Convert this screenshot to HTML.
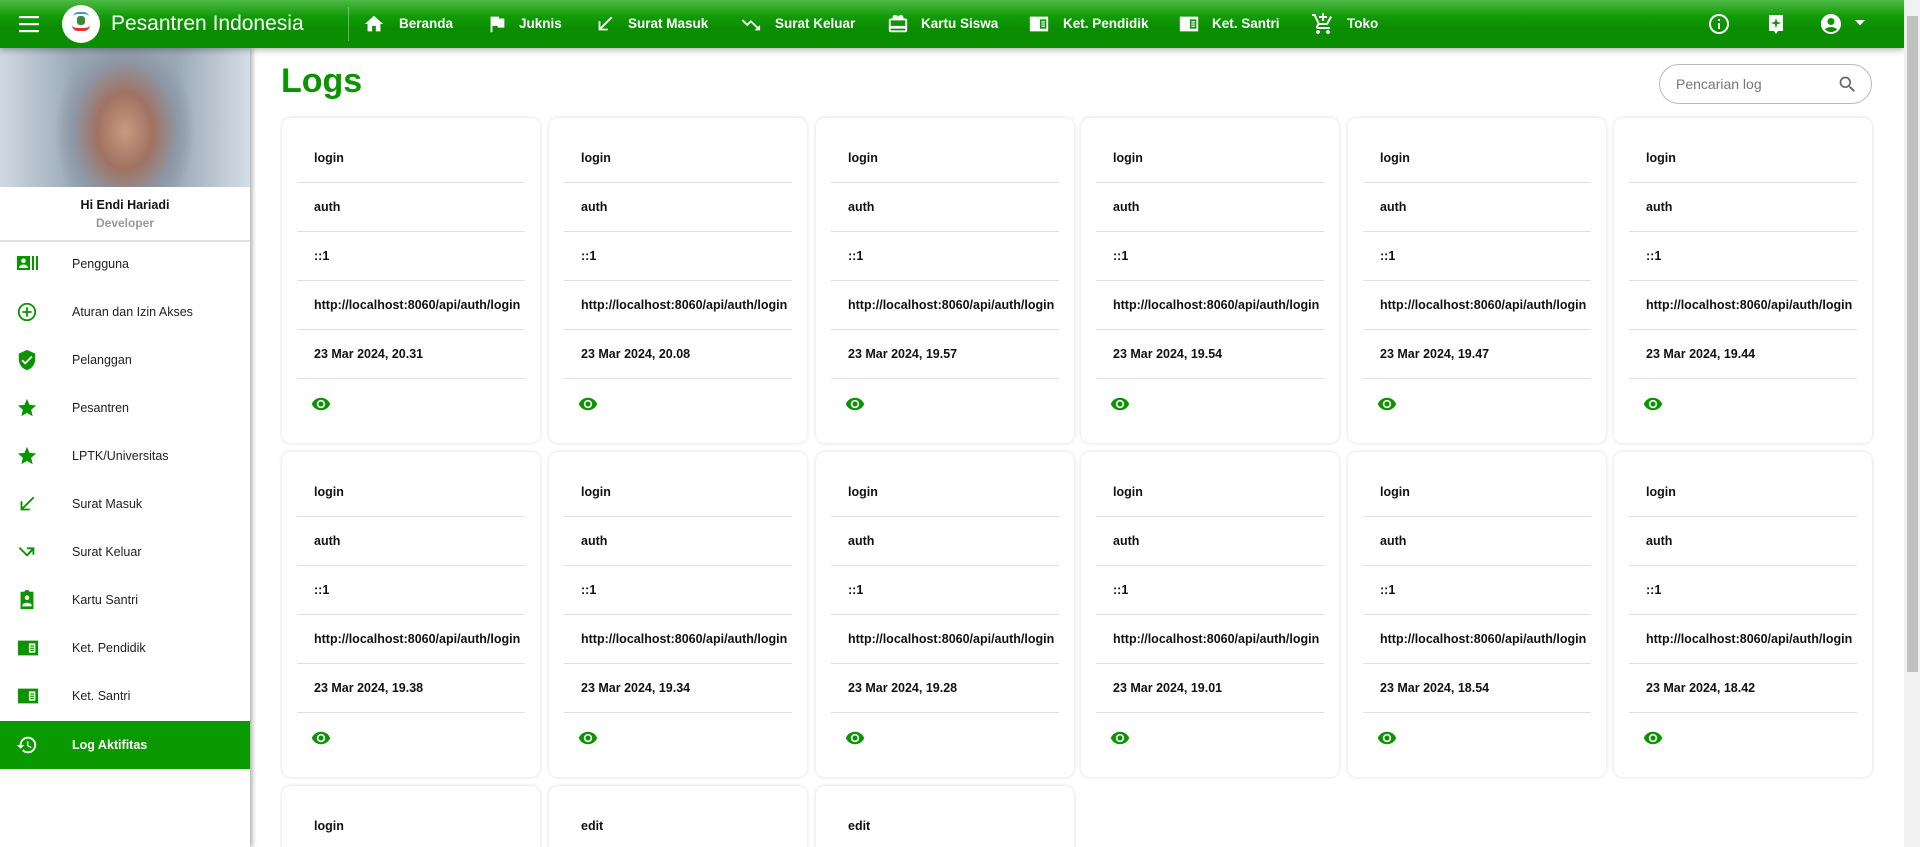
<!DOCTYPE html>
<html style="overflow:hidden;height:847px"><head><meta charset="utf-8"><style>
*{box-sizing:border-box;margin:0;padding:0}
body{width:1920px;height:847px;overflow:hidden;background:#fff;font-family:"Liberation Sans",sans-serif;position:relative}
.nav{position:absolute;left:0;top:0;width:1904px;height:48px;background:linear-gradient(#4cb944 0%,#129a08 35%,#0a8e00 60%,#0a8e00 100%);box-shadow:0 2px 6px rgba(0,0,0,.3);z-index:5;color:#fff}
.nav .t{position:absolute;top:0;line-height:48px;font-size:13.5px;font-weight:bold}
.nav svg{position:absolute;fill:#fff}
.scroll{position:absolute;right:0;top:0;width:16px;height:847px;background:#f1f1f1;z-index:6}
.scroll div{position:absolute;left:3px;top:16px;width:11px;height:656px;background:#c1c1c1}
.side{position:absolute;left:0;top:48px;width:250px;height:799px;background:#fff;box-shadow:2px 0 5px rgba(0,0,0,.35);z-index:3}
.mi{position:absolute;left:0;width:250px;height:48px;font-size:12.5px;color:#222;line-height:48px}
.mi span{position:absolute;left:72px}
.mi svg{position:absolute;left:16px;top:13px;fill:#0a9400}
.mi.act{background:#0a9a00;color:#fff;font-weight:bold}
.mi.act svg{fill:#fff}
.card{position:absolute;width:258px;height:325px;background:#fff;border-radius:9px;box-shadow:0 0 4px rgba(0,0,0,.14)}
.row{position:absolute;left:15px;right:15px;height:49px;border-bottom:1.5px solid #e0e0e0;font-size:12.5px;font-weight:bold;color:#111;line-height:48px;padding-left:17px}
.card svg{position:absolute;left:28px;top:276px;fill:#0a9400}
</style></head><body>
<div class="nav">
<svg style="left:19px;top:15px" width="20" height="18" viewBox="0 0 20 18"><rect y="1" width="20" height="2.2"/><rect y="8" width="20" height="2.2"/><rect y="15" width="20" height="2.2"/></svg>
<div style="position:absolute;left:62px;top:5px;width:38px;height:38px;border-radius:50%;background:#fff"><div style="position:absolute;left:10px;top:20px;width:18px;height:6px;border-bottom:3px solid #d33;border-radius:0 0 8px 8px"></div><div style="position:absolute;left:15px;top:11px;width:8px;height:9px;background:#3a8a3a;border-radius:3px"></div><div style="position:absolute;left:11px;top:7px;width:16px;height:5px;border-top:2px solid #3aa0c0;border-radius:8px 8px 0 0"></div></div>
<div class="t" style="left:111px;font-size:21px;font-weight:normal">Pesantren Indonesia</div>
<div style="position:absolute;left:348px;top:7px;width:1px;height:34px;background:rgba(255,255,255,.35)"></div>
<svg style="left:363px;top:13px" width="22" height="22" viewBox="0 0 24 24"><path d="M10 20v-6h4v6h5v-8h3L12 3 2 12h3v8z"/></svg><div class="t" style="left:399px">Beranda</div>
<svg style="left:486px;top:13px" width="22" height="22" viewBox="0 0 24 24"><path d="M14.4 6 14 4H5v17h2v-7h5.6l.4 2h7V6z"/></svg><div class="t" style="left:519px">Juknis</div>
<svg style="left:594px;top:13px" width="22" height="22" viewBox="0 0 24 24"><path d="M20 5.41 18.59 4 7 15.59V9H5v10h10v-2H8.41z"/></svg><div class="t" style="left:628px">Surat Masuk</div>
<svg style="left:739px;top:13px" width="22" height="22" viewBox="0 0 24 24"><path d="M3 8.41 9 14.41l4-4 6.3 6.29L17 19h6v-6l-2.29 2.29L13 7.59l-4 4-4.59-4.59z"/></svg><div class="t" style="left:775px">Surat Keluar</div>
<svg style="left:887px;top:13px" width="22" height="22" viewBox="0 0 24 24"><path d="M20 6h-2.18c.11-.31.18-.65.18-1 0-1.66-1.34-3-3-3-1.05 0-1.960.54-2.5 1.35l-.5.67-.5-.68C10.96 2.54 10.05 2 9 2 7.34 2 6 3.34 6 5c0 .35.07.69.18 1H4c-1.11 0-2 .89-2 2v11c0 1.11.89 2 2 2h16c1.11 0 2-.89 2-2V8c0-1.110-.89-2-2-2zm0 13H4v-2h16v2zm0-5H4V8h16v6z"/></svg><div class="t" style="left:921px">Kartu Siswa</div>
<svg style="left:1028px;top:13px" width="22" height="22" viewBox="0 0 24 24"><path d="M2 4h20v16H2zM13 7v10h7V7zm1.5 2h4v1.3h-4zm0 2.4h4v1.3h-4zm0 2.4h4v1.3h-4z" fill-rule="evenodd"/></svg><div class="t" style="left:1063px">Ket. Pendidik</div>
<svg style="left:1178px;top:13px" width="22" height="22" viewBox="0 0 24 24"><path d="M2 4h20v16H2zM13 7v10h7V7zm1.5 2h4v1.3h-4zm0 2.4h4v1.3h-4zm0 2.4h4v1.3h-4z" fill-rule="evenodd"/></svg><div class="t" style="left:1212px">Ket. Santri</div>
<svg style="left:1311px;top:12px" width="24" height="24" viewBox="0 0 24 24"><path d="M11 9h2V6h3V4h-3V1h-2v3H8v2h3v3zm-4 9c-1.1 0-2 .9-2 2s.9 2 2 2 2-.9 2-2-.9-2-2-2zm10 0c-1.1 0-2 .9-2 2s.9 2 2 2 2-.9 2-2-.9-2-2-2zm-8.9-5h7.45c.75 0 1.41-.41 1.75-1.03L21 4.96 19.25 4l-3.7 7H8.53L4.27 2H1v2h2l3.6 7.59-1.35 2.44C4.52 15.37 5.48 17 7 17h12v-2H7l1.1-2z"/></svg><div class="t" style="left:1347px">Toko</div>
<svg style="left:1707px;top:12px" width="24" height="24" viewBox="0 0 24 24"><path d="M12 2a10 10 0 1 0 0 20 10 10 0 0 0 0-20zm0 18a8 8 0 1 1 0-16 8 8 0 0 1 0 16zm-1-3h2v-6h-2zm0-8h2V7h-2z"/></svg>
<svg style="left:1764px;top:12px" width="24" height="24" viewBox="0 0 24 24"><path d="M5 3h14v16h-5l-2 3-2-3H5zm7 3-1.2 3.8L7 11l3.8 1.2L12 16l1.2-3.8L17 11l-3.8-1.2z" fill-rule="evenodd"/></svg>
<svg style="left:1819px;top:12px" width="24" height="24" viewBox="0 0 24 24"><path d="M12 2C6.48 2 2 6.48 2 12s4.48 10 10 10 10-4.48 10-10S17.52 2 12 2zm0 4c1.93 0 3.5 1.57 3.5 3.5S13.93 13 12 13s-3.5-1.57-3.5-3.5S10.07 6 12 6zm0 14c-2.03 0-4.430-.82-6.14-2.88C7.55 15.8 9.68 15 12 15s4.45.8 6.14 2.12C16.43 19.18 14.03 20 12 20z"/></svg>
<svg style="left:1854px;top:19px" width="12" height="8" viewBox="0 0 12 8"><path d="M1 1h10L6 6.5z"/></svg>
</div>
<div class="scroll"><div></div></div>
<div class="side">
<div style="position:absolute;left:0;top:0;width:250px;height:139px;background:radial-gradient(ellipse 70px 95px at 50% 60%,#c79a80 0%,#a07262 40%,rgba(140,150,165,.9) 75%,transparent 100%),linear-gradient(90deg,#cfd9e2,#9aa8b6 30%,#9aa8b6 70%,#d5dee6)"></div>
<div style="position:absolute;top:150px;width:250px;text-align:center;font-size:12.5px;font-weight:bold;color:#111">Hi Endi Hariadi</div>
<div style="position:absolute;top:168px;width:250px;text-align:center;font-size:12px;font-weight:bold;color:#999">Developer</div>
<div style="position:absolute;left:0;top:192px;width:250px;height:1.5px;background:#e0e0e0"></div>
</div>
<div style="position:absolute;left:0;top:240px;z-index:4">
<div class="mi" style="top:0"><svg width="24" height="22" viewBox="0 0 24 22"><path d="M1 3h13v14H1zm6.5 2.5a2.3 2.3 0 1 0 0 4.6 2.3 2.3 0 0 0 0-4.6zM3 15h9c0-2-2-3.5-4.5-3.5S3 13 3 15zM16 3h2v14h-2zm4 0h2v14h-2z" fill-rule="evenodd"/></svg><span>Pengguna</span></div>
<div class="mi" style="top:48px"><svg width="22" height="22" viewBox="0 0 24 24"><path d="M13 7h-2v4H7v2h4v4h2v-4h4v-2h-4zm-1-5C6.49 2 2 6.49 2 12s4.49 10 10 10 10-4.49 10-10S17.51 2 12 2zm0 18c-4.41 0-8-3.59-8-8s3.59-8 8-8 8 3.59 8 8-3.59 8-8 8z"/></svg><span>Aturan dan Izin Akses</span></div>
<div class="mi" style="top:96px"><svg width="22" height="22" viewBox="0 0 24 24"><path d="M12 1 3 5v6c0 5.55 3.84 10.74 9 12 5.16-1.26 9-6.45 9-12V5zm-2 16-4-4 1.41-1.41L10 14.17l6.59-6.59L18 9z"/></svg><span>Pelanggan</span></div>
<div class="mi" style="top:144px"><svg width="22" height="22" viewBox="0 0 24 24"><path d="M12 17.27 18.18 21l-1.64-7.03L22 9.24l-7.19-.61L12 2 9.19 8.63 2 9.24l5.46 4.73L5.82 21z"/></svg><span>Pesantren</span></div>
<div class="mi" style="top:192px"><svg width="22" height="22" viewBox="0 0 24 24"><path d="M12 17.27 18.18 21l-1.64-7.03L22 9.24l-7.19-.61L12 2 9.19 8.63 2 9.24l5.46 4.73L5.82 21z"/></svg><span>LPTK/Universitas</span></div>
<div class="mi" style="top:240px"><svg width="22" height="22" viewBox="0 0 24 24"><path d="M20 5.41 18.59 4 7 15.59V9H5v10h10v-2H8.41z"/></svg><span>Surat Masuk</span></div>
<div class="mi" style="top:288px"><svg width="22" height="22" viewBox="0 0 24 24"><path d="M3 8l9 9 6-6v4h2V7h-8v2h4.6L12 14.2 4.4 6.6z"/></svg><span>Surat Keluar</span></div>
<div class="mi" style="top:336px"><svg width="22" height="22" viewBox="0 0 24 24"><path d="M19 3h-4.18C14.4 1.84 13.3 1 12 1s-2.4.84-2.82 2H5v19h14zm-7 4a2.5 2.5 0 1 1 0 5 2.5 2.5 0 0 1 0-5zm5 12H7v-1.5c0-1.67 3.33-2.5 5-2.5s5 .83 5 2.5z"/></svg><span>Kartu Santri</span></div>
<div class="mi" style="top:384px"><svg width="24" height="22" viewBox="0 0 24 24"><path d="M1 4h22v16H1zM13 7v10h7V7zm1.5 2.2h4v1.3h-4zm0 2.4h4v1.3h-4zm0 2.4h4v1.3h-4z" fill-rule="evenodd"/></svg><span>Ket. Pendidik</span></div>
<div class="mi" style="top:432px"><svg width="24" height="22" viewBox="0 0 24 24"><path d="M1 4h22v16H1zM13 7v10h7V7zm1.5 2.2h4v1.3h-4zm0 2.4h4v1.3h-4zm0 2.4h4v1.3h-4z" fill-rule="evenodd"/></svg><span>Ket. Santri</span></div>
<div class="mi act" style="top:481px"><svg width="22" height="22" viewBox="0 0 24 24"><path d="M13 3a9 9 0 0 0-9 9H1l3.89 3.89.07.14L9 12H6c0-3.87 3.13-7 7-7s7 3.13 7 7-3.13 7-7 7c-1.93 0-3.68-.79-4.94-2.06l-1.42 1.42A8.954 8.954 0 0 0 13 21a9 9 0 0 0 0-18zm-1 5v5l4.28 2.54.72-1.21-3.5-2.08V8z"/></svg><span>Log Aktifitas</span></div>
</div>
<div style="position:absolute;left:281px;top:62px;font-size:34px;font-weight:bold;color:#0a9400">Logs</div>
<div style="position:absolute;left:1659px;top:64px;width:213px;height:40px;border:1px solid #bbb;border-radius:20px;font-size:14px;color:#777;line-height:38px;padding-left:16px">Pencarian log
<svg style="position:absolute;right:13px;top:9px" width="21" height="21" viewBox="0 0 24 24"><path fill="#666" d="M15.5 14h-.79l-.28-.27A6.471 6.471 0 0 0 16 9.5 6.5 6.5 0 1 0 9.5 16c1.61 0 3.09-.59 4.23-1.57l.27.28v.79l5 4.99L20.49 19l-4.99-5zm-6 0C7.01 14 5 11.99 5 9.5S7.01 5 9.5 5 14 7.01 14 9.5 11.99 14 9.5 14z"/></svg></div>
<div id="cards"></div>
<script>
var xs=[282,549,816,1081,1348,1614],ys=[118,452,786];
var t1=["20.31","20.08","19.57","19.54","19.47","19.44","19.38","19.34","19.28","19.01","18.54","18.42","18.40","18.30","18.20"];
var h="";
for(var i=0;i<15;i++){var c=i%6,r=Math.floor(i/6);var a=(i==13||i==14)?"edit":"login";
h+='<div class="card" style="left:'+xs[c]+'px;top:'+ys[r]+'px">';
var v=[a,"auth","::1","http://localhost:8060/api/auth/login","23 Mar 2024, "+t1[i]];
for(var k=0;k<5;k++)h+='<div class="row" style="top:'+(16+k*49)+'px">'+v[k]+'</div>';
h+='<svg width="22" height="20" viewBox="0 0 24 24"><path d="M12 4.5C7 4.5 2.73 7.61 1 12c1.73 4.39 6 7.5 11 7.5s9.27-3.11 11-7.5c-1.73-4.39-6-7.5-11-7.5zM12 17c-2.76 0-5-2.24-5-5s2.24-5 5-5 5 2.24 5 5-2.24 5-5 5zm0-8c-1.66 0-3 1.34-3 3s1.34 3 3 3 3-1.34 3-3-1.34-3-3-3z"/></svg></div>';}
document.getElementById("cards").innerHTML=h;
</script>
</body></html>
